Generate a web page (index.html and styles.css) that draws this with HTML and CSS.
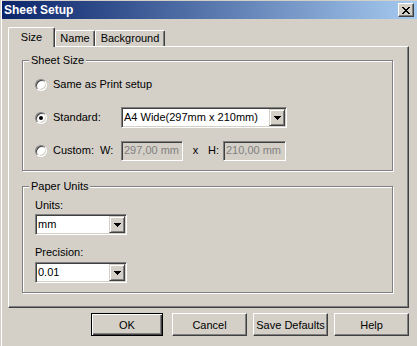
FILE: index.html
```html
<!DOCTYPE html>
<html lang="en">
<head>
    <meta charset="UTF-8">
    <title>Sheet Setup</title>
    <link rel="stylesheet" href="styles.css">
</head>
<body>
    <div class="window">
        <div class="titlebar">
            <span class="title">Sheet Setup</span>
            <span class="close-btn">
                <svg width="8" height="7" viewBox="0 0 8 7" shape-rendering="crispEdges"><path d="M0 0h2v1H0zM6 0h2v1H6zM1 1h2v1H1zM5 1h2v1H5zM2 2h4v1H2zM3 3h2v1H3zM2 4h4v1H2zM1 5h2v1H1zM5 5h2v1H5zM0 6h2v1H0zM6 6h2v1H6z" fill="#000"/></svg>
            </span>
        </div>

        <div class="dialog-body">
            <div class="tabs">
                <div class="tab tab-size active">Size</div>
                <div class="tab tab-name">Name</div>
                <div class="tab tab-bg">Background</div>
            </div>

            <div class="panel">
                <!-- Tamaño de hoja -->
                <div class="group group-sheet">
                    <div class="group-title">Sheet Size</div>
                    <div class="row first">
                        <label class="choice"><span class="radio"></span>Same as Print setup</label>
                    </div>
                    <div class="row">
                        <label class="choice choice-wide"><span class="radio checked"></span>Standard:</label>
                        <div class="combo combo-standard">
                            <span class="combo-value">A4 Wide(297mm x 210mm)</span>
                            <span class="combo-btn"><svg width="7" height="4" viewBox="0 0 7 4" shape-rendering="crispEdges"><path d="M0 0h7v1H0zM1 1h5v1H1zM2 2h3v1H2zM3 3h1v1H3z" fill="#000"/></svg></span>
                        </div>
                    </div>
                    <div class="row">
                        <label class="choice choice-custom"><span class="radio"></span>Custom:</label>
                        <span class="dim-label">W:</span>
                        <div class="text-input disabled input-w">297,00 mm</div>
                        <span class="times">x</span>
                        <span class="dim-label dim-h">H:</span>
                        <div class="text-input disabled input-h">210,00 mm</div>
                    </div>
                </div>

                <!-- Unidades -->
                <div class="group group-units">
                    <div class="group-title">Paper Units</div>
                    <div class="field-label units-label">Units:</div>
                    <div class="combo combo-small units-combo">
                        <span class="combo-value">mm</span>
                        <span class="combo-btn"><svg width="7" height="4" viewBox="0 0 7 4" shape-rendering="crispEdges"><path d="M0 0h7v1H0zM1 1h5v1H1zM2 2h3v1H2zM3 3h1v1H3z" fill="#000"/></svg></span>
                    </div>
                    <div class="field-label precision-label">Precision:</div>
                    <div class="combo combo-small precision-combo">
                        <span class="combo-value">0.01</span>
                        <span class="combo-btn"><svg width="7" height="4" viewBox="0 0 7 4" shape-rendering="crispEdges"><path d="M0 0h7v1H0zM1 1h5v1H1zM2 2h3v1H2zM3 3h1v1H3z" fill="#000"/></svg></span>
                    </div>
                </div>
            </div>

            <div class="buttons">
                <button class="btn btn-default">OK</button>
                <button class="btn">Cancel</button>
                <button class="btn">Save Defaults</button>
                <button class="btn">Help</button>
            </div>
        </div>
    </div>
</body>
</html>
```

FILE: styles.css
```css
/* Estilos generales */
* {
    box-sizing: border-box;
    margin: 0;
    padding: 0;
}

body {
    font-family: "Liberation Sans", Arial, sans-serif;
    font-size: 11px;
    line-height: 13px;
    color: #000;
    background-color: #d4d0c8;
}

.window {
    width: 417px;
    height: 346px;
    overflow: hidden;
    background-color: #d4d0c8;
    border-left: 1px solid #d4d0c8;
    padding: 1px 0 0 1px;
    box-shadow: inset 1px 0 0 #fff;
}

/* Barra de titulo */
.titlebar {
    height: 18px;
    display: flex;
    align-items: center;
    justify-content: space-between;
    padding: 0 3px 0 2px;
    background: linear-gradient(to right, #0a246a, #a6caf0);
}

.title {
    color: #fff;
    font-weight: bold;
    font-size: 12px;
}

.close-btn {
    width: 16px;
    height: 14px;
    display: flex;
    align-items: center;
    justify-content: center;
    background-color: #d4d0c8;
    border-top: 1px solid #fff;
    border-left: 1px solid #fff;
    border-right: 1px solid #404040;
    border-bottom: 1px solid #404040;
    box-shadow: inset -1px -1px 0 #808080;
}

.dialog-body {
    padding-left: 6px;
}

/* Pestanas */
.tabs {
    display: flex;
    align-items: flex-end;
    height: 20px;
    margin-top: 8px;
    margin-bottom: -1px;
    position: relative;
    z-index: 1;
}

.tab {
    height: 16px;
    margin-bottom: 1px;
    padding-top: 1px;
    text-align: center;
    background-color: #d4d0c8;
    border-top: 1px solid #fff;
    border-left: 1px solid #fff;
    border-right: 1px solid #404040;
    border-radius: 2px 2px 0 0;
    box-shadow: inset -1px 0 0 #808080;
}

.tab.active {
    height: 20px;
    margin-bottom: 0;
    padding-top: 3px;
}

.tab-size { width: 47px; }
.tab-name { width: 40px; }
.tab-bg { width: 70px; }

.panel {
    width: 401px;
    height: 262px;
    padding: 13px 0 0 13px;
    border-top: 1px solid #fff;
    border-left: 1px solid #fff;
    border-right: 1px solid #404040;
    border-bottom: 1px solid #404040;
    box-shadow: inset -1px -1px 0 #808080;
}

/* Grupos */
.group {
    width: 371px;
    padding: 0 0 9px 12px;
    border: 1px solid #808080;
    box-shadow: inset 1px 1px 0 #fff, 1px 1px 0 #fff;
}

.group-units {
    margin-top: 15px;
}

.group-title {
    width: fit-content;
    margin: -7px 0 0 -6px;
    padding: 0 2px;
    background-color: #d4d0c8;
}

.row {
    display: flex;
    align-items: center;
    height: 21px;
    margin-top: 12px;
}

.row.first {
    margin-top: 7px;
}

.choice {
    display: flex;
    align-items: center;
}

.choice-wide { width: 86px; }
.choice-custom { width: 65px; }

.radio {
    width: 12px;
    height: 12px;
    margin-right: 6px;
    border-radius: 50%;
    background-color: #fff;
    border: 1px solid;
    border-color: #808080 #fff #fff #808080;
    box-shadow: inset 1px 1px 0 #404040, inset -1px -1px 0 #d4d0c8;
    display: flex;
    align-items: center;
    justify-content: center;
}

.radio.checked::after {
    content: "";
    width: 4px;
    height: 4px;
    border-radius: 50%;
    background-color: #000;
}

/* Combos y campos */
.combo,
.text-input {
    height: 21px;
    padding: 1px;
    border: 1px solid;
    border-color: #808080 #fff #fff #808080;
    box-shadow: inset 1px 1px 0 #404040, inset -1px -1px 0 #d4d0c8;
    background-color: #fff;
}

.combo {
    display: flex;
}

.combo-standard { width: 166px; }
.combo-small { width: 92px; }

.combo-value {
    flex: 1;
    padding: 1px 0 0 1px;
    line-height: 15px;
    white-space: nowrap;
    overflow: hidden;
}

.combo-btn {
    width: 16px;
    height: 17px;
    display: flex;
    align-items: center;
    justify-content: center;
    background-color: #d4d0c8;
    border-top: 1px solid #d4d0c8;
    border-left: 1px solid #d4d0c8;
    border-right: 1px solid #404040;
    border-bottom: 1px solid #404040;
    box-shadow: inset 1px 1px 0 #fff, inset -1px -1px 0 #808080;
}

.text-input {
    height: 20px;
    padding: 2px 0 0 2px;
    white-space: nowrap;
}

.text-input.disabled {
    background-color: #d4d0c8;
    color: #808080;
}

.input-w { width: 62px; }
.input-h { width: 63px; }

.dim-label { width: 21px; }
.dim-h { width: 15px; }

.times {
    width: 25px;
    text-align: center;
}

.field-label.units-label { margin-top: 6px; }
.units-combo { margin-top: 2px; }
.field-label.precision-label { margin-top: 11px; }
.precision-combo { margin-top: 3px; }

/* Botones */
.buttons {
    width: 401px;
    margin-top: 5px;
    display: flex;
    justify-content: flex-end;
    gap: 6px;
}

.btn {
    width: 75px;
    height: 23px;
    font-family: inherit;
    font-size: 11px;
    color: #000;
    background-color: #d4d0c8;
    border-top: 1px solid #fff;
    border-left: 1px solid #fff;
    border-right: 1px solid #404040;
    border-bottom: 1px solid #404040;
    box-shadow: inset -1px -1px 0 #808080;
}

.btn-default {
    width: 72px;
    margin-right: 3px;
    border: 1px solid #000;
    box-shadow: inset 1px 1px 0 #fff, inset -1px -1px 0 #404040, inset -2px -2px 0 #808080;
}
```
